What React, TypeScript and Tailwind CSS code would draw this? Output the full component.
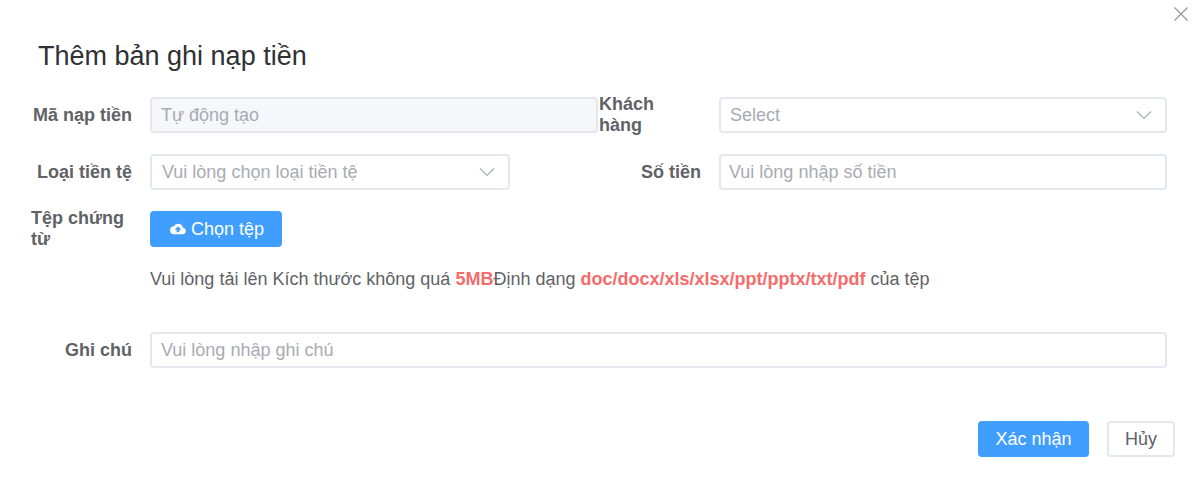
const labelClass = 'w-[120px] h-9 shrink-0 pr-[18px] flex justify-end items-center text-[18px] leading-[21px] font-bold text-[#606266]';
const boxClass = 'h-9 rounded-[4px] border-2 border-[#e4e7ed] flex items-center text-[18px] text-[#a8abb2]';

function Chevron() {
  return (
    <svg width="18" height="18" viewBox="0 0 18 18" fill="none" stroke="#a8abb2" strokeWidth="1.1" className="shrink-0">
      <path d="M2 5.5 L9 12.5 L16 5.5" />
    </svg>
  );
}

function Field({ label, children }: { label: React.ReactNode; children: React.ReactNode }) {
  return (
    <div className="flex items-center w-[568px]">
      <div className={labelClass}>{label}</div>
      {children}
    </div>
  );
}

export default function App() {
  return (
    <div className="relative w-[1196px] h-[481px] bg-white font-['Liberation_Sans',Arial,sans-serif] overflow-hidden">
      <button className="absolute right-[7px] top-[6px] text-[#909399]">
        <svg width="16" height="16" viewBox="0 0 16 16" fill="none" stroke="currentColor" strokeWidth="1.1">
          <path d="M1.5 1.5 L14.5 14.5 M14.5 1.5 L1.5 14.5" />
        </svg>
      </button>

      <div className="pt-[40px] pl-[38px] text-[27px] leading-[32px] text-[#303133]">Thêm bản ghi nạp tiền</div>

      <form className="pl-[30px] pr-[29px] pt-[25px]">
        <div className="flex gap-px">
          <Field label={<span>Mã nạp tiền</span>}>
            <div className={`${boxClass} w-[448px] pl-[9px] bg-[#f5f7fa]`}>Tự động tạo</div>
          </Field>
          <Field label={<span className="w-[102px] shrink-0 -ml-px">Khách<br />hàng</span>}>
            <div className={`${boxClass} w-[448px] justify-between pl-[9px] pr-[12px]`}>
              <span>Select</span>
              <Chevron />
            </div>
          </Field>
        </div>

        <div className="flex gap-px mt-[21px]">
          <Field label={<span>Loại tiền tệ</span>}>
            <div className={`${boxClass} w-[360px] justify-between pl-[10px] pr-[12px]`}>
              <span>Vui lòng chọn loại tiền tệ</span>
              <Chevron />
            </div>
          </Field>
          <Field label={<span>Số tiền</span>}>
            <div className={`${boxClass} w-[448px] pl-[8px]`}>Vui lòng nhập số tiền</div>
          </Field>
        </div>

        <div className="flex items-start mt-[21px]">
          <div className={labelClass}>
            <span className="w-[101px] shrink-0">Tệp chứng từ</span>
          </div>
          <div>
            <button type="button" className="h-9 w-[132px] rounded-[4px] bg-[#409eff] text-white text-[18px] flex items-center pl-[20px] gap-[5px]">
              <svg width="16" height="16" viewBox="0 0 24 24" fill="currentColor">
                <path d="M19.35 10.04A7.49 7.49 0 0 0 12 4a7.5 7.5 0 0 0-6.65 4.04A6 6 0 0 0 6 20h13a5 5 0 0 0 .35-9.96ZM14 13v4h-4v-4H7l5-5 5 5h-3Z" />
              </svg>
              Chọn tệp
            </button>
            <div className="mt-[21px] text-[18px] leading-[22px] text-[#606266]">
              Vui lòng tải lên Kích thước không quá <b className="text-[#f56c6c]">5MB</b>Định dạng{' '}
              <b className="text-[#f56c6c]">doc/docx/xls/xlsx/ppt/pptx/txt/pdf</b> của tệp
            </div>
          </div>
        </div>

        <div className="flex items-center mt-[42px]">
          <div className={labelClass}>
            <span>Ghi chú</span>
          </div>
          <div className={`${boxClass} w-[1017px] pl-[9px]`}>Vui lòng nhập ghi chú</div>
        </div>
      </form>

      <div className="flex justify-end gap-[18px] pr-[21px] mt-[53px]">
        <button className="h-9 w-[111px] rounded-[4px] bg-[#409eff] text-white text-[18px]">Xác nhận</button>
        <button className="h-9 w-[68px] rounded-[4px] border-2 border-[#e4e7ed] bg-white text-[#606266] text-[18px]">Hủy</button>
      </div>
    </div>
  );
}
